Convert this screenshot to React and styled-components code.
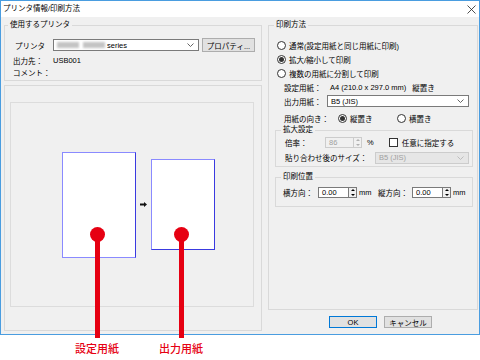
import React from 'react'
import styled, { createGlobalStyle } from 'styled-components'

const GlobalStyle = createGlobalStyle`
    html, body {
        margin: 0;
        padding: 0;
        background: #fff;
    }
    body {
        font-family: "Liberation Sans", "Noto Sans CJK JP", sans-serif;
        font-size: 7.5px;
        color: #000;
    }
`

const Page = styled.div`
    position: relative;
    width: 480px;
    height: 360px;
    overflow: hidden;
`

const Window = styled.div`
    width: 480px;
    height: 335px;
    box-sizing: border-box;
    border: 1px solid #4a9de0;
    background: #f0f0f0;
    display: flex;
    flex-direction: column;
`

const TitleBar = styled.div`
    height: 16px;
    flex: none;
    background: #fff;
    display: flex;
    align-items: center;
    justify-content: space-between;
    padding: 0 3px 0 2px;
    line-height: 10px;
`

const Body = styled.div`
    flex: 1;
    min-height: 0;
    display: flex;
    gap: 6px;
    padding: 3px 1px 3px 3px;
`

const LeftCol = styled.div`
    width: 258px;
    flex: none;
    display: flex;
    flex-direction: column;
    gap: 4px;
`

const RightCol = styled.div`
    flex: 1;
    min-width: 0;
    display: flex;
    flex-direction: column;
    padding-bottom: 3px;
`

const Group = styled.fieldset`
    margin: ${p => p.$margin || '0'};
    padding: 0 0 ${p => p.$bottom || 3}px 0;
    border: 1px solid #d9d9d9;
    min-width: 0;
    display: flex;
    flex-direction: column;
    flex: ${p => (p.$grow ? 1 : 'none')};
`

const Legend = styled.legend`
    padding: 0 2px;
    margin-left: ${p => p.$indent || 3}px;
    line-height: 10px;
`

const Row = styled.div`
    display: flex;
    align-items: center;
    height: ${p => p.$h || 14}px;
    padding-left: ${p => p.$indent || 0}px;
    margin-top: ${p => p.$top || 0}px;
    white-space: nowrap;
`

const Label = styled.span`
    width: ${p => p.$w}px;
    flex: none;
`

const Muted = styled.span`
    color: ${p => (p.$disabled ? '#a0a0a0' : '#000')};
`

const SelectBox = styled.div`
    width: ${p => p.$w}px;
    height: ${p => p.$h || 12}px;
    box-sizing: border-box;
    display: flex;
    align-items: center;
    justify-content: space-between;
    padding: 0 4px 0 3px;
    border: 1px solid ${p => (p.$disabled ? '#cccccc' : '#7a7a7a')};
    background: ${p => (p.$disabled ? '#e6e6e6' : '#fff')};
    color: ${p => (p.$disabled ? '#a0a0a0' : '#000')};
`

const Blur = styled.span`
    display: inline-block;
    width: ${p => p.$w}px;
    height: 6px;
    margin-right: ${p => p.$gap}px;
    background: #c4c4c4;
    filter: blur(1px);
`

const PushButton = styled.div`
    width: ${p => p.$w}px;
    height: ${p => p.$h || 12}px;
    box-sizing: border-box;
    display: flex;
    align-items: center;
    justify-content: center;
    background: #e1e1e1;
    border: 1px solid ${p => (p.$primary ? '#0078d7' : '#adadad')};
    margin-left: ${p => p.$left || 0}px;
`

const RadioDot = styled.span`
    width: 9px;
    height: 9px;
    box-sizing: border-box;
    border-radius: 50%;
    border: 1px solid #333;
    background: #fff;
    display: inline-flex;
    align-items: center;
    justify-content: center;
    margin-right: 3px;
    flex: none;
    &::after {
        content: '';
        width: 5px;
        height: 5px;
        border-radius: 50%;
        background: ${p => (p.$on ? '#333' : 'transparent')};
    }
`

const RadioItem = styled.span`
    display: inline-flex;
    align-items: center;
    width: ${p => (p.$w ? `${p.$w}px` : 'auto')};
`

const CheckSquare = styled.span`
    width: 9px;
    height: 9px;
    box-sizing: border-box;
    border: 1px solid #333;
    background: #fff;
    margin: 0 4px 0 ${p => p.$left || 0}px;
    flex: none;
`

const SpinWrap = styled.div`
    display: flex;
    height: ${p => p.$h || 11}px;
    margin-right: 2px;
`

const SpinField = styled.div`
    width: ${p => p.$w}px;
    box-sizing: border-box;
    border: 1px solid ${p => (p.$disabled ? '#cccccc' : '#7a7a7a')};
    background: ${p => (p.$disabled ? '#f0f0f0' : '#fff')};
    color: ${p => (p.$disabled ? '#a0a0a0' : '#000')};
    padding-left: 3px;
    display: flex;
    align-items: center;
`

const SpinArrows = styled.div`
    width: 8px;
    box-sizing: border-box;
    border: 1px solid ${p => (p.$disabled ? '#cccccc' : '#7a7a7a')};
    border-left: none;
    background: #f0f0f0;
    display: flex;
    flex-direction: column;
    align-items: center;
    justify-content: space-around;
    color: ${p => (p.$disabled ? '#b0b0b0' : '#000')};
`

const Unit = styled.span`
    margin-left: ${p => p.$left || 0}px;
`

const Preview = styled.div`
    flex: 1;
    display: flex;
    padding: 16px 7px 23px 5px;
    border: 1px solid #d9d9d9;
`

const PreviewCanvas = styled.div`
    flex: 1;
    display: flex;
    align-items: center;
    justify-content: center;
    gap: 4px;
    padding-left: 12px;
    border: 1px solid #dcdcdc;
`

const Paper = styled.div`
    width: ${p => p.$w}px;
    height: ${p => p.$h}px;
    box-sizing: border-box;
    background: #fff;
    border: 1px solid;
    border-color: #8a8aff #3a3ae0 ${p => p.$bottom} #8a8aff;
`

const ButtonRow = styled.div`
    display: flex;
    margin-top: 6px;
    padding-left: 61px;
`

const Callout = styled.div`
    position: absolute;
    top: 227px;
    left: ${p => p.$x}px;
    transform: translateX(-50%);
    display: flex;
    flex-direction: column;
    align-items: center;
    pointer-events: none;
`

const CalloutDot = styled.span`
    width: 15px;
    height: 15px;
    border-radius: 50%;
    background: #e60012;
`

const CalloutStem = styled.span`
    width: 5px;
    height: 97px;
    margin-top: -1px;
    background: #e60012;
`

const CalloutText = styled.span`
    margin-top: 4px;
    font-family: "Noto Sans CJK JP", sans-serif;
    font-size: 11px;
    line-height: 13px;
    font-weight: 500;
    color: #e60012;
    white-space: nowrap;
`

const Chevron = () => (
    <svg width="7" height="4" viewBox="0 0 7 4">
        <path d="M0.5 0.5 L3.5 3.5 L6.5 0.5" fill="none" stroke="currentColor" strokeWidth="0.9" />
    </svg>
)

const Select = ({ w, disabled, children }) => (
    <SelectBox $w={w} $disabled={disabled}>
        <span>{children}</span>
        <span style={{ color: disabled ? '#b8b8b8' : '#555', display: 'flex' }}><Chevron /></span>
    </SelectBox>
)

const Spin = ({ w, value, disabled }) => (
    <SpinWrap>
        <SpinField $w={w} $disabled={disabled}>{value}</SpinField>
        <SpinArrows $disabled={disabled}>
            <svg width="4" height="2" viewBox="0 0 4 2"><path d="M0 2 L2 0 L4 2 Z" fill="currentColor" /></svg>
            <svg width="4" height="2" viewBox="0 0 4 2"><path d="M0 0 L2 2 L4 0 Z" fill="currentColor" /></svg>
        </SpinArrows>
    </SpinWrap>
)

const Radio = ({ on, w, children }) => (
    <RadioItem $w={w}>
        <RadioDot $on={on} />
        {children}
    </RadioItem>
)

export default function App() {
    return (
        <Page>
            <GlobalStyle />
            <Window>
                <TitleBar>
                    <span>プリンタ情報/印刷方法</span>
                    <svg width="9" height="9" viewBox="0 0 9 9">
                        <path d="M0.5 0.5 L8.5 8.5 M8.5 0.5 L0.5 8.5" stroke="#222" strokeWidth="0.8" />
                    </svg>
                </TitleBar>
                <Body>
                    <LeftCol>
                        <Group>
                            <Legend>使用するプリンタ</Legend>
                            <Row $indent={10} $top={8}>
                                <Label $w={38}>プリンタ</Label>
                                <Select w={146}>
                                    <Blur $w={22} $gap={4} />
                                    <Blur $w={22} $gap={2} />
                                    series
                                </Select>
                                <PushButton $w={53} $h={14} $left={3}>プロパティ...</PushButton>
                            </Row>
                            <Row $indent={8} $h={10} $top={3}>
                                <Label $w={40}>出力先：</Label>
                                USB001
                            </Row>
                            <Row $indent={8} $h={10} $top={2}>
                                <Label $w={40}>コメント：</Label>
                            </Row>
                        </Group>
                        <Preview>
                            <PreviewCanvas>
                                <Paper $w={74} $h={106} $bottom="#8a8aff" />
                                <svg width="7" height="5" viewBox="0 0 7 5">
                                    <path d="M0 1.6 H4 V0 L7 2.5 L4 5 V3.4 H0 Z" fill="#111" />
                                </svg>
                                <Paper $w={64} $h={91} $bottom="#3a3ae0" />
                            </PreviewCanvas>
                        </Preview>
                    </LeftCol>
                    <RightCol>
                        <Group $grow>
                            <Legend $indent={5}>印刷方法</Legend>
                            <Row $indent={8} $top={8}>
                                <Radio>通常(設定用紙と同じ用紙に印刷)</Radio>
                            </Row>
                            <Row $indent={8}>
                                <Radio on>拡大/縮小して印刷</Radio>
                            </Row>
                            <Row $indent={8}>
                                <Radio>複数の用紙に分割して印刷</Radio>
                            </Row>
                            <Row $indent={15}>
                                <Label $w={46}>設定用紙：</Label>
                                A4 (210.0 x 297.0 mm)
                                <Unit $left={6}>縦置き</Unit>
                            </Row>
                            <Row $indent={15}>
                                <Label $w={43}>出力用紙：</Label>
                                <Select w={142}>B5 (JIS)</Select>
                            </Row>
                            <Row $indent={15} $top={3}>
                                <Label $w={54}>用紙の向き：</Label>
                                <Radio on w={59}>縦置き</Radio>
                                <Radio>横置き</Radio>
                            </Row>
                            <Group $margin="0 4px 0 6px">
                                <Legend $indent={5}>拡大設定</Legend>
                                <Row $indent={9} $h={11} $top={2}>
                                    <Label $w={40}>倍率：</Label>
                                    <Spin w={29} value="86" disabled />
                                    <Unit $left={3}>%</Unit>
                                    <CheckSquare $left={15} />
                                    任意に指定する
                                </Row>
                                <Row $indent={9} $h={11} $top={4}>
                                    <Label $w={90}>貼り合わせ後のサイズ：</Label>
                                    <Select w={94} disabled>B5 (JIS)</Select>
                                </Row>
                            </Group>
                            <Group $margin="5px 4px 0 6px" $bottom={8}>
                                <Legend $indent={5}>印刷位置</Legend>
                                <Row $indent={7} $h={11} $top={5}>
                                    <Label $w={35}>横方向：</Label>
                                    <Spin w={31} value="0.00" />
                                    <Label $w={19}>mm</Label>
                                    <Label $w={34}>縦方向：</Label>
                                    <Spin w={31} value="0.00" />
                                    <Unit>mm</Unit>
                                </Row>
                            </Group>
                        </Group>
                        <ButtonRow>
                            <PushButton $w={48} $primary>OK</PushButton>
                            <PushButton $w={48} $left={7}>キャンセル</PushButton>
                        </ButtonRow>
                    </RightCol>
                </Body>
            </Window>
            <Callout $x={97}>
                <CalloutDot />
                <CalloutStem />
                <CalloutText>設定用紙</CalloutText>
            </Callout>
            <Callout $x={181}>
                <CalloutDot />
                <CalloutStem />
                <CalloutText>出力用紙</CalloutText>
            </Callout>
        </Page>
    )
}
